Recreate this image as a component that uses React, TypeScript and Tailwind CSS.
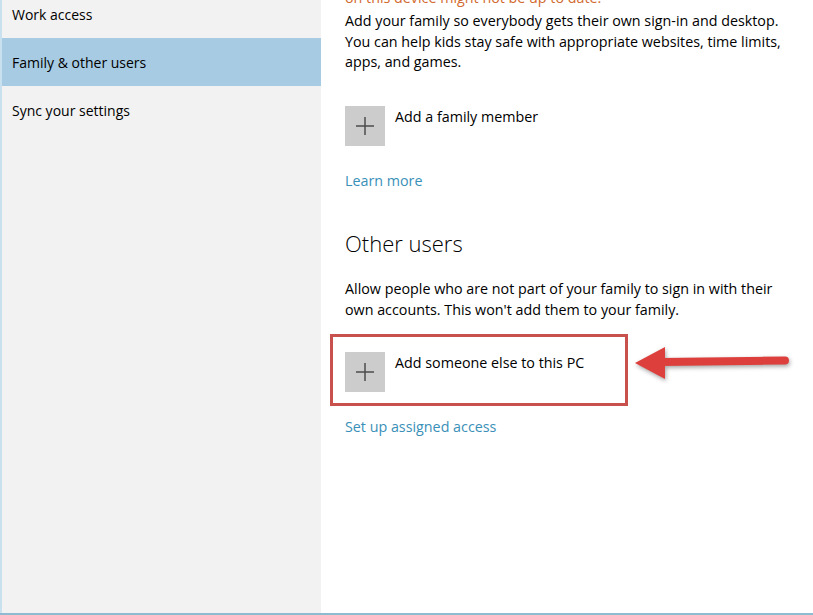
import React from "react";

const PlusBox = () => (
  <div className="flex h-[40px] w-[40px] shrink-0 items-center justify-center bg-[#cccccc]">
    <svg width="20" height="20" viewBox="0 0 20 20">
      <line x1="10" y1="1" x2="10" y2="19" stroke="#4d4d4d" strokeWidth="1.5" />
      <line x1="1" y1="10" x2="19" y2="10" stroke="#4d4d4d" strokeWidth="1.5" />
    </svg>
  </div>
);

export default function App() {
  return (
    <div
      className="relative flex h-[615px] w-[813px] overflow-hidden border-b-2 border-[#8fbad3] bg-white text-black"
      style={{ fontFamily: '"Open Sans", "Noto Sans", sans-serif' }}
    >
      <aside className="flex w-[321px] shrink-0 flex-col border-l-2 border-[#c9e0ee] bg-[#f2f2f2] text-[14px]">
        <div className="-mt-[10px] flex h-[48px] items-center pl-[10px]">Work access</div>
        <div className="flex h-[48px] items-center bg-[#a6cbe3] pl-[10px]">Family &amp; other users</div>
        <div className="flex h-[48px] items-center pl-[10px]">Sync your settings</div>
      </aside>

      <main className="flex flex-1 flex-col pl-[24px] text-[14.3px] leading-[20.5px]">
        <div className="-mt-[12px] h-[20px] text-[#d2692e]">on this device might not be up to date.</div>
        <p className="mt-[3px] w-[455px]">
          Add your family so everybody gets their own sign-in and desktop.
          You can help kids stay safe with appropriate websites, time limits,
          apps, and games.
        </p>
        <div className="mt-[33px] flex items-start gap-[10px]">
          <PlusBox />
          <span className="mt-[1px]">Add a family member</span>
        </div>
        <a className="mt-[25px] w-fit text-[#3990b8]">Learn more</a>
        <h2 className="mt-[37px] text-[22px] font-light leading-[30px]">Other users</h2>
        <p className="mt-[21px] w-[445px]">
          Allow people who are not part of your family to sign in with their
          own accounts. This won't add them to your family.
        </p>
        <div className="relative mt-[32px] flex items-start gap-[10px]">
          <PlusBox />
          <span className="mt-[1px]">Add someone else to this PC</span>
          <div className="pointer-events-none absolute -left-[15px] -top-[18px] h-[72px] w-[298px] border-[3px] border-[#c8504d]" />
        </div>
        <a className="mt-[25px] w-fit text-[#3990b8]">Set up assigned access</a>
      </main>

      <svg
        className="absolute left-[620px] top-[330px] drop-shadow-[1px_2px_2px_rgba(0,0,0,0.35)]"
        width="180"
        height="60"
        viewBox="0 0 180 60"
      >
        <line x1="40" y1="32" x2="165" y2="30.5" stroke="#dd403c" strokeWidth="8" strokeLinecap="round" />
        <polygon points="15,33 45,17 45,49" fill="#dd403c" />
      </svg>
    </div>
  );
}
